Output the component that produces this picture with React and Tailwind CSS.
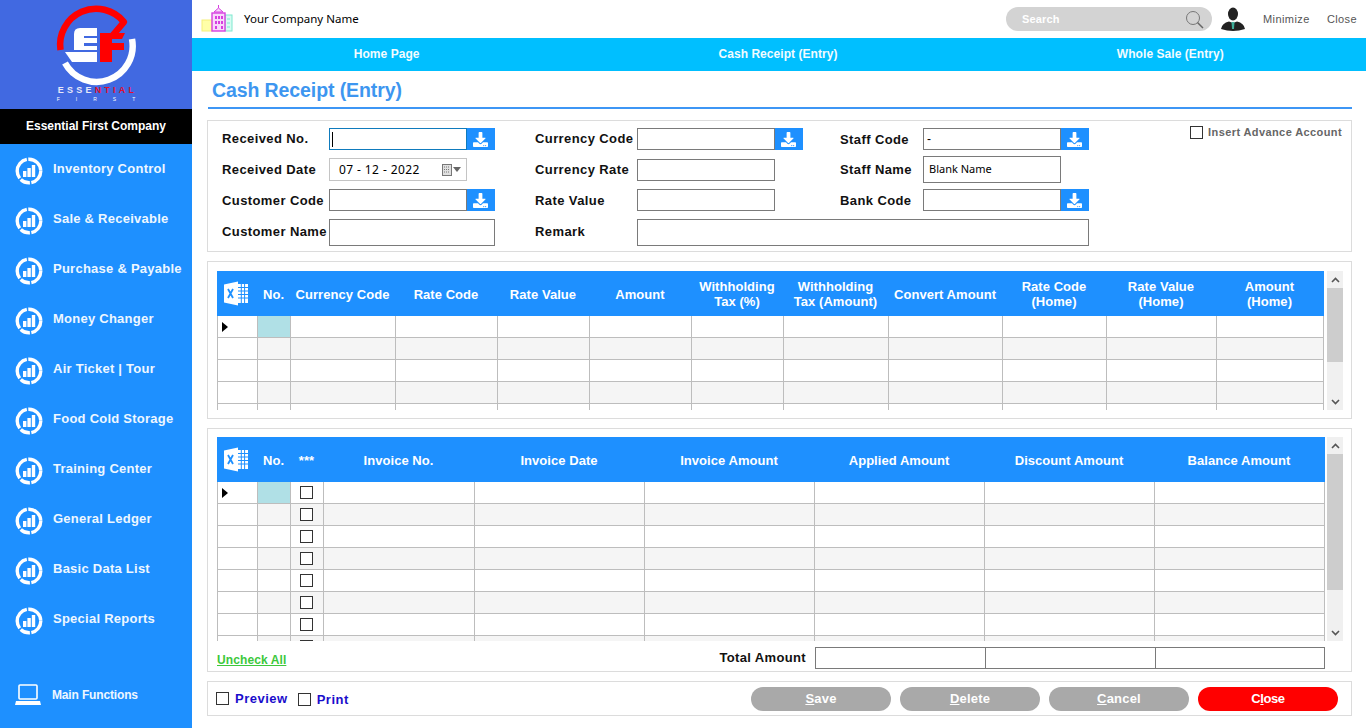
import React from "react";
import { FaDownload } from "react-icons/fa";

const menu = ["Inventory Control","Sale & Receivable","Purchase & Payable","Money Changer","Air Ticket | Tour","Food Cold Storage","Training Center","General Ledger","Basic Data List","Special Reports"];

function Logo() {
  return (
    <svg width="92" height="87" viewBox="50 0 92 87" className="block">
      <path d="M60.5 50 A36 36 0 0 1 124 22 L113 35" fill="none" stroke="#ff0000" strokeWidth="6.5" strokeLinejoin="round" />
      <path d="M132 39 A36 36 0 0 1 65 63" fill="none" stroke="#ffffff" strokeWidth="6.5" />
      <path d="M100 62 V33 H125 L122 39 H112 V43 H124 V50 H112 V62 Z" fill="#ff0000" />
      <path d="M74 50 V34 Q74 28 80 28 H97 V36 H84 V38 H97 V43 H84 V46 H97 V50 Z" fill="#ffffff" />
      <path d="M65 52 H97 V62 H72 Z" fill="#ffffff" />
    </svg>
  );
}

function ChartIcon() {
  return (
    <svg width="28" height="28" viewBox="0 0 28 28" className="mt-[3px] shrink-0">
      <circle cx="14" cy="14" r="11.8" fill="none" stroke="#ffffff" strokeWidth="3.4" strokeDasharray="16 1.5 10 1.5 24 1.5 19 1.5" />
      <rect x="8" y="14" width="3.4" height="6" fill="#ffffff" />
      <rect x="12.4" y="11" width="3.4" height="9" fill="#ffffff" />
      <rect x="16.8" y="8" width="3.4" height="12" fill="#ffffff" />
    </svg>
  );
}

function Building() {
  return (
    <svg width="36" height="30" viewBox="0 0 36 30" className="shrink-0">
      <rect x="2" y="16" width="10" height="11" fill="#ffffa8" stroke="#f5f07a" />
      <rect x="25" y="11" width="7" height="16" fill="#d8fbf2" stroke="#7fe8d0" />
      <path d="M27 15h3M27 19h3M27 23h3" stroke="#7fe8d0" />
      <rect x="12" y="9" width="13" height="18" fill="#f8d8fb" stroke="#d63fe0" strokeWidth="1.4" />
      <path d="M14 8 L18.5 4 L23 8 Z" fill="#f8d8fb" stroke="#d63fe0" />
      <path d="M18.5 1v3" stroke="#d63fe0" />
      <path d="M15 12h2v3h-2zM18 12h2v3h-2zM21 12h2v3h-2zM15 17h2v3h-2zM18 17h2v3h-2zM21 17h2v3h-2zM15 22h2v3h-2zM21 22h2v3h-2z" fill="#d63fe0" />
    </svg>
  );
}

function Avatar() {
  return (
    <svg width="24" height="24" viewBox="0 0 24 24" className="shrink-0">
      <ellipse cx="12" cy="7" rx="5" ry="6.5" fill="#222222" />
      <path d="M0 22 Q1 16 8 14.5 L12 16 L16 14.5 Q23 16 24 22 Q12 26 0 22 Z" fill="#222222" />
      <path d="M10.5 15 H13.5 L13 22 H11 Z" fill="#3fae9a" />
    </svg>
  );
}

function Excel() {
  return (
    <svg width="26" height="25" viewBox="0 0 26 25" className="shrink-0">
      <path d="M1 3.5 L15 0.5 V24.5 L1 21.5 Z" fill="#ffffff" />
      <path d="M5 8 L10 17 M10 8 L5 17" stroke="#1e90ff" strokeWidth="1.8" />
      <rect x="15" y="3" width="10" height="19" fill="#ffffff" />
      <path d="M18.3 3v19M21.6 3v19M15 6.5h10M15 10h10M15 13.5h10M15 17h10" stroke="#1e90ff" strokeWidth="1" />
    </svg>
  );
}

function Arrow() {
  return (
    <svg width="6" height="10" viewBox="0 0 6 10"><path d="M0 0 L6 5 L0 10 Z" fill="#000000" /></svg>
  );
}

function Picker({ value }) {
  return (
    <div className="flex h-[22px] w-[166px]">
      <div className="flex h-full w-[138px] items-center border border-[#7a7a7a] pl-[3px] text-[12px] text-black">{value}</div>
      <div className="flex h-full w-[28px] items-center justify-center bg-[#1e90ff] pr-[1px] text-white"><FaDownload size={15} /></div>
    </div>
  );
}

function Scrollbar({ thumb, rest }) {
  return (
    <div className="flex w-[16px] flex-col bg-[#f0f0f0]">
      <div className="flex h-[17px] items-center justify-center">
        <svg width="9" height="6" viewBox="0 0 9 6"><path d="M1 5 L4.5 1.5 L8 5" fill="none" stroke="#555555" strokeWidth="1.6" /></svg>
      </div>
      <div className={thumb}></div>
      <div className={rest}></div>
      <div className="flex h-[17px] items-center justify-center">
        <svg width="9" height="6" viewBox="0 0 9 6"><path d="M1 1 L4.5 4.5 L8 1" fill="none" stroke="#555555" strokeWidth="1.6" /></svg>
      </div>
    </div>
  );
}

const cols1 = "grid-cols-[41px_33px_105px_102px_92px_102px_92px_105px_114px_104px_110px_107px]";
const heads1 = ["No.","Currency Code","Rate Code","Rate Value","Amount",["Withholding","Tax (%)"],["Withholding","Tax (Amount)"],"Convert Amount",["Rate Code","(Home)"],["Rate Value","(Home)"],["Amount","(Home)"]];
const cols2 = "grid-cols-[41px_33px_33px_151px_170px_170px_170px_170px_170px]";
const heads2 = ["No.","***","Invoice No.","Invoice Date","Invoice Amount","Applied Amount","Discount Amount","Balance Amount"];

function Table({ cols, heads, rows, count, check, bodyH, width }) {
  return (
    <div className={width}>
      <div className={`grid h-[45px] items-center bg-[#1e90ff] text-center text-[13px] font-bold leading-[15px] tracking-[0.05px] text-white ${cols}`}>
        <div className="flex justify-center pr-[3px]"><Excel /></div>
        {heads.map((h, i) => (
          Array.isArray(h)
            ? <div key={i} className="pr-[2px]">{h[0]}<br />{h[1]}</div>
            : <div key={i} className="mt-[2px] pr-[2px]">{h}</div>
        ))}
      </div>
      <div className={`overflow-hidden ${bodyH}`}>
        {Array.from({ length: rows }).map((_, r) => (
          <div key={r} className={`grid h-[22px] border-b border-[#bdbdbd] ${cols}`}>
            {Array.from({ length: count }).map((_, c) => {
              const shade = c === 0 ? "bg-white" : r === 0 && c === 1 ? "bg-[#b0e0e6]" : r % 2 === 1 ? "bg-[#f5f5f5]" : "bg-white";
              return (
                <div key={c} className={`flex items-center border-r border-[#bdbdbd] ${shade} ${c === 0 ? "border-l pl-[4px]" : "justify-center"}`}>
                  {c === 0 && r === 0 ? <Arrow /> : null}
                  {check && c === 2 ? <div className="mr-[2px] h-[13px] w-[13px] border border-[#333333] bg-white"></div> : null}
                </div>
              );
            })}
          </div>
        ))}
      </div>
    </div>
  );
}

function Btn({ pre, u, post, red }) {
  return (
    <button className={`h-[24px] w-[140px] rounded-full text-center text-[13px] font-bold text-white ${red ? "bg-[#ff0000] tracking-[-0.4px]" : "bg-[#a9a9a9]"}`}>
      {pre}<span className="underline">{u}</span>{post}
    </button>
  );
}

export default function App() {
  return (
    <div className="flex h-[728px] w-[1366px] overflow-hidden bg-white font-['Liberation_Sans',Arial,sans-serif] tracking-[0.2px]">
      <aside className="flex w-[192px] shrink-0 flex-col bg-[#1e90ff]">
        <div className="flex h-[109px] flex-col items-center bg-[#4169e1]">
          <Logo />
          <div className="mt-[-1px] pl-[3px] text-[9px] font-bold leading-[9px] tracking-[3.2px] text-[#e8e8f8]">ESSE<span className="text-[#e01030]">NTIAL</span></div>
          <div className="mt-[1px] pl-[16px] text-[5px] leading-[6px] tracking-[16px] text-white">FIRST</div>
        </div>
        <div className="flex h-[35px] items-center justify-center bg-black pb-[2px] text-[12px] font-bold tracking-normal text-white">Essential First Company</div>
        {menu.map((m) => (
          <div key={m} className="flex h-[50px] items-center pl-[15px] text-[13px] font-bold tracking-[0.25px] text-[#eef7ff]">
            <ChartIcon />
            <span className="ml-[10px] whitespace-nowrap">{m}</span>
          </div>
        ))}
        <div className="mt-[26px] flex h-[50px] items-center pl-[15px] text-[12px] font-bold tracking-[-0.15px] text-[#eef7ff]">
          <svg width="26" height="22" viewBox="0 0 26 22" className="shrink-0">
            <rect x="4" y="1" width="18" height="14" rx="1" fill="none" stroke="#ffffff" strokeWidth="1.6" />
            <path d="M1 17 H25 L26 21 H0 Z" fill="#ffffff" />
          </svg>
          <span className="ml-[11px] whitespace-nowrap">Main Functions</span>
        </div>
      </aside>

      <main className="flex min-w-0 flex-1 flex-col">
        <header className="flex h-[38px] items-center pl-[8px]">
          <Building />
          <span className="ml-[8px] font-['Noto_Sans',sans-serif] text-[11.5px] tracking-normal text-black">Your Company Name</span>
          <div className="ml-auto flex h-[24px] w-[206px] items-center justify-between rounded-full bg-[#d3d3d3] pl-[16px] pr-[8px] text-[11px] font-bold text-white">
            <span>Search</span>
            <svg width="19" height="19" viewBox="0 0 19 19"><circle cx="8" cy="8" r="6.5" fill="none" stroke="#777777" /><path d="M12.5 12.5 L18 18" stroke="#666666" strokeWidth="1.5" /></svg>
          </div>
          <div className="ml-[9px]"><Avatar /></div>
          <span className="ml-[18px] text-[11px] font-medium tracking-[0.45px] text-[#555555]">Minimize</span>
          <span className="ml-[17px] mr-[9px] text-[11px] font-medium tracking-[0.4px] text-[#555555]">Close</span>
        </header>
        <nav className="grid h-[33px] grid-cols-3 items-center bg-[#00bfff] pb-[2px] text-center text-[12px] font-bold tracking-[0.05px] text-[#f2fbff]">
          <span className="pr-[2px]">Home Page</span>
          <span className="pr-[2px]">Cash Receipt (Entry)</span>
          <span>Whole Sale (Entry)</span>
        </nav>

        <div className="ml-[16px] mr-[14px] flex h-[38px] items-center border-b-2 border-[#3d96f5] pl-[4px] pt-[4px] text-[19.5px] font-bold tracking-[-0.1px] text-[#3d96f0]">Cash Receipt (Entry)</div>

        <div className="ml-[15px] mr-[14px] mt-[11px] flex flex-col gap-[9px]">
          <section className="grid h-[132px] grid-cols-[107px_206px_102px_203px_83px_166px_1fr] grid-rows-[22px_23px_22px_27px] items-center gap-y-[8px] border border-[#dcdcdc] pl-[14px] pt-[7px] text-[13px] font-bold tracking-[0.4px] text-[#111111]">
            <span>Received No.</span>
            <div className="flex h-[22px] w-[166px]">
              <div className="flex h-full w-[138px] items-center border border-[#0f7bbd] pl-[2px]"><div className="h-[15px] w-px bg-black"></div></div>
              <div className="flex h-full w-[28px] items-center justify-center bg-[#1e90ff] pr-[1px] text-white"><FaDownload size={15} /></div>
            </div>
            <span>Currency Code</span>
            <Picker />
            <span className="mt-[2px]">Staff Code</span>
            <div className="font-normal"><Picker value="-" /></div>
            <div className="mb-[13px] mr-[9px] flex items-center justify-end gap-[5px] text-[11px] font-bold tracking-[0.4px] text-[#666666]">
              <div className="h-[13px] w-[13px] border border-[#333333]"></div>
              <span className="whitespace-nowrap">Insert Advance Account</span>
            </div>

            <span>Received Date</span>
            <div className="flex h-[23px] w-[138px] items-center border border-[#c4c4c4] pl-[9px] pr-[5px] text-[12px] font-normal text-black">
              <span className="font-['Noto_Sans',sans-serif] tracking-[0.4px]">07 - 12 - 2022</span>
              <svg width="10" height="12" viewBox="0 0 10 12" className="ml-auto"><rect x="0.5" y="0.5" width="9" height="11" fill="#e0e0e0" stroke="#777777" /><path d="M2 3h6M2 5.5h6M2 8h6" stroke="#777777" strokeDasharray="1 1" /></svg>
              <svg width="8" height="5" viewBox="0 0 8 5" className="ml-[1px]"><path d="M0 0 H8 L4 5 Z" fill="#666666" /></svg>
            </div>
            <span>Currency Rate</span>
            <div className="h-[22px] w-[138px] border border-[#7a7a7a]"></div>
            <span>Staff Name</span>
            <div className="flex h-[27px] w-[138px] items-center border border-[#7a7a7a] pl-[5px] font-['Noto_Sans',sans-serif] text-[11px] font-normal tracking-normal text-black">Blank Name</div>
            <div></div>

            <span className="mt-[2px]">Customer Code</span>
            <Picker />
            <span className="mt-[2px]">Rate Value</span>
            <div className="h-[22px] w-[138px] border border-[#7a7a7a]"></div>
            <span className="mt-[2px]">Bank Code</span>
            <Picker />
            <div></div>

            <span className="mb-[2px] whitespace-nowrap">Customer Name</span>
            <div className="h-[27px] w-[166px] border border-[#7a7a7a]"></div>
            <span className="mb-[2px]">Remark</span>
            <div className="col-span-3 h-[27px] w-[452px] border border-[#7a7a7a]"></div>
            <div></div>
          </section>

          <section className="flex h-[158px] gap-[3px] border border-[#dcdcdc] pl-[9px] pt-[9px]">
            <Table cols={cols1} heads={heads1} rows={5} count={12} bodyH="h-[94px]" width="w-[1107px]" />
            <div className="flex h-[139px]"><Scrollbar thumb="h-[74px] bg-[#cdcdcd]" rest="flex-1" /></div>
          </section>

          <section className="flex h-[244px] flex-col border border-[#dcdcdc] pl-[9px] pt-[8px]">
            <div className="flex gap-[2px]">
              <Table cols={cols2} heads={heads2} rows={8} count={9} check bodyH="h-[159px]" width="w-[1108px]" />
              <div className="flex h-[204px]"><Scrollbar thumb="h-[136px] bg-[#cdcdcd]" rest="flex-1" /></div>
            </div>
            <div className="mt-[6px] flex h-[22px] w-[1108px] items-center">
              <span className="mt-[3px] text-[12px] font-bold tracking-[0.1px] text-[#3cc83c] underline">Uncheck All</span>
              <span className="ml-auto mr-[9px] text-[13px] font-bold tracking-[0.35px] text-[#111111]">Total Amount</span>
              <div className="h-[22px] w-[171px] border border-[#7a7a7a]"></div>
              <div className="ml-[-1px] h-[22px] w-[171px] border border-[#7a7a7a]"></div>
              <div className="ml-[-1px] h-[22px] w-[170px] border border-[#7a7a7a]"></div>
            </div>
          </section>

          <section className="flex h-[35px] items-center border border-[#dcdcdc] pl-[8px] pr-[13px] text-[13px] font-bold tracking-[0.5px] text-[#1a0dcc]">
            <div className="h-[13px] w-[13px] border border-[#333333]"></div>
            <span className="ml-[6px]">Preview</span>
            <div className="ml-[10px] mt-[2px] h-[13px] w-[13px] border border-[#333333]"></div>
            <span className="ml-[6px] mt-[2px]">Print</span>
            <div className="ml-auto flex gap-[9px] tracking-[0.2px]">
              <Btn u="S" post="ave" />
              <Btn u="D" post="elete" />
              <Btn u="C" post="ancel" />
              <Btn pre="C" u="l" post="ose" red />
            </div>
          </section>
        </div>
      </main>
    </div>
  );
}
